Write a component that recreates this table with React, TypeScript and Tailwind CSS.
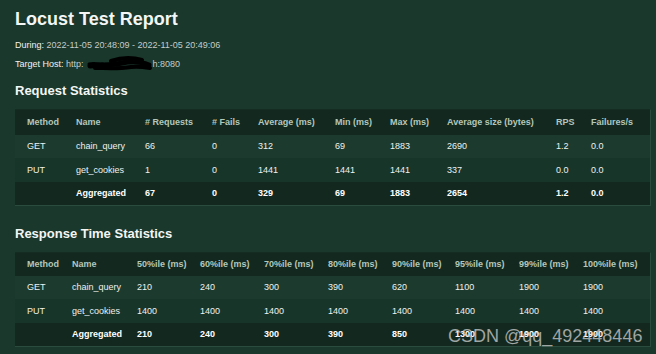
import React from "react";

const reqCols = "grid-cols-[49px_69px_67px_46px_77px_55px_57px_109px_35px_71px]";
const rtCols = "grid-cols-[45px_65px_63px_64px_64px_64px_63px_64px_64px_79px]";

const reqHead = ["Method", "Name", "# Requests", "# Fails", "Average (ms)", "Min (ms)", "Max (ms)", "Average size (bytes)", "RPS", "Failures/s"];
const reqRows = [
  ["GET", "chain_query", "66", "0", "312", "69", "1883", "2690", "1.2", "0.0"],
  ["PUT", "get_cookies", "1", "0", "1441", "1441", "1441", "337", "0.0", "0.0"],
];
const reqAgg = ["", "Aggregated", "67", "0", "329", "69", "1883", "2654", "1.2", "0.0"];

const rtHead = ["Method", "Name", "50%ile (ms)", "60%ile (ms)", "70%ile (ms)", "80%ile (ms)", "90%ile (ms)", "95%ile (ms)", "99%ile (ms)", "100%ile (ms)"];
const rtRows = [
  ["GET", "chain_query", "210", "240", "300", "390", "620", "1100", "1900", "1900"],
  ["PUT", "get_cookies", "1400", "1400", "1400", "1400", "1400", "1400", "1400", "1400"],
];
const rtAgg = ["", "Aggregated", "210", "240", "300", "390", "850", "1300", "1900", "1900"];

function Row({ cells, cols, cls }: { cells: string[]; cols: string; cls: string }) {
  return (
    <div className={`grid ${cols} items-center ${cls}`}>
      {cells.map((c, i) => (
        <div key={i} className="pl-[12px] whitespace-nowrap">
          {c}
        </div>
      ))}
    </div>
  );
}

function StatTable({
  head,
  rows,
  agg,
  cols,
  heights,
}: {
  head: string[];
  rows: string[][];
  agg: string[];
  cols: string;
  heights: string[];
}) {
  return (
    <div className="w-[636px] border-t border-t-[#142c22] border-r border-r-[#2a4c3f] border-b border-b-[#2a4c3f] text-[9px] leading-[9px]">
      <Row cells={head} cols={cols} cls={`bg-[#13291f] font-bold text-[#b3c7bb] ${heights[0]}`} />
      <Row cells={rows[0]} cols={cols} cls={`bg-[#1c3b2e] text-[#eef2ef] ${heights[1]}`} />
      <Row cells={rows[1]} cols={cols} cls={`bg-[#18352a] text-[#eef2ef] ${heights[2]}`} />
      <Row cells={agg} cols={cols} cls={`bg-[#13291f] font-bold text-white ${heights[3]}`} />
    </div>
  );
}

export default function App() {
  return (
    <div className="relative w-[656px] h-[354px] overflow-hidden bg-[#1a382c] text-white font-['Liberation_Sans',Arial,sans-serif]">
      <div className="pl-[15px] pt-[10px]">
        <h1 className="text-[18px] leading-[18px] font-bold text-[#f3f6f4]">Locust Test Report</h1>
        <p className="mt-[13px] text-[9px] leading-[9px] text-[#f0f3f1]">
          During: <span className="text-[#c4cdc8]">2022-11-05 20:48:09 - 2022-11-05 20:49:06</span>
        </p>
        <p className="relative mt-[10px] text-[9px] leading-[9px] text-[#f0f3f1]">
          Target Host:{" "}
          <span className="text-[#c4cdc8]">
            http:<span className="inline-block w-[69px]"></span>h:8080
          </span>
          <svg className="absolute left-[72px] top-[-5px]" width="68" height="18" viewBox="0 0 68 18">
            <g stroke="#000" strokeLinecap="round" fill="none">
              <path d="M3 11 C13 9 22 11 35 8 C44 6 53 6 62 10" strokeWidth="5" />
              <path d="M8 13 C19 13 31 14 44 12 C51 11 57 12 63 13" strokeWidth="4" />
              <path d="M24 6 C33 3 44 2 55 5" strokeWidth="4" />
              <path d="M2 9 C6 8 10 9 16 9" strokeWidth="3" />
            </g>
          </svg>
        </p>
        <h2 className="mt-[15px] text-[13px] leading-[13px] font-bold text-[#f3f6f4]">Request Statistics</h2>
        <div className="mt-[12px]">
          <StatTable
            head={reqHead}
            rows={reqRows}
            agg={reqAgg}
            cols={reqCols}
            heights={["h-[25px]", "h-[23px]", "h-[24px]", "h-[23px]"]}
          />
        </div>
        <h2 className="mt-[21px] text-[13px] leading-[13px] font-bold text-[#f3f6f4]">Response Time Statistics</h2>
        <div className="mt-[12px]">
          <StatTable
            head={rtHead}
            rows={rtRows}
            agg={rtAgg}
            cols={rtCols}
            heights={["h-[23px]", "h-[23px]", "h-[24px]", "h-[23px]"]}
          />
        </div>
      </div>
      <div className="absolute left-[448px] top-[327px] text-[18px] leading-[18px] text-[#d0d0d0]/75 whitespace-nowrap">
        CSDN @qq_492448446
      </div>
    </div>
  );
}
